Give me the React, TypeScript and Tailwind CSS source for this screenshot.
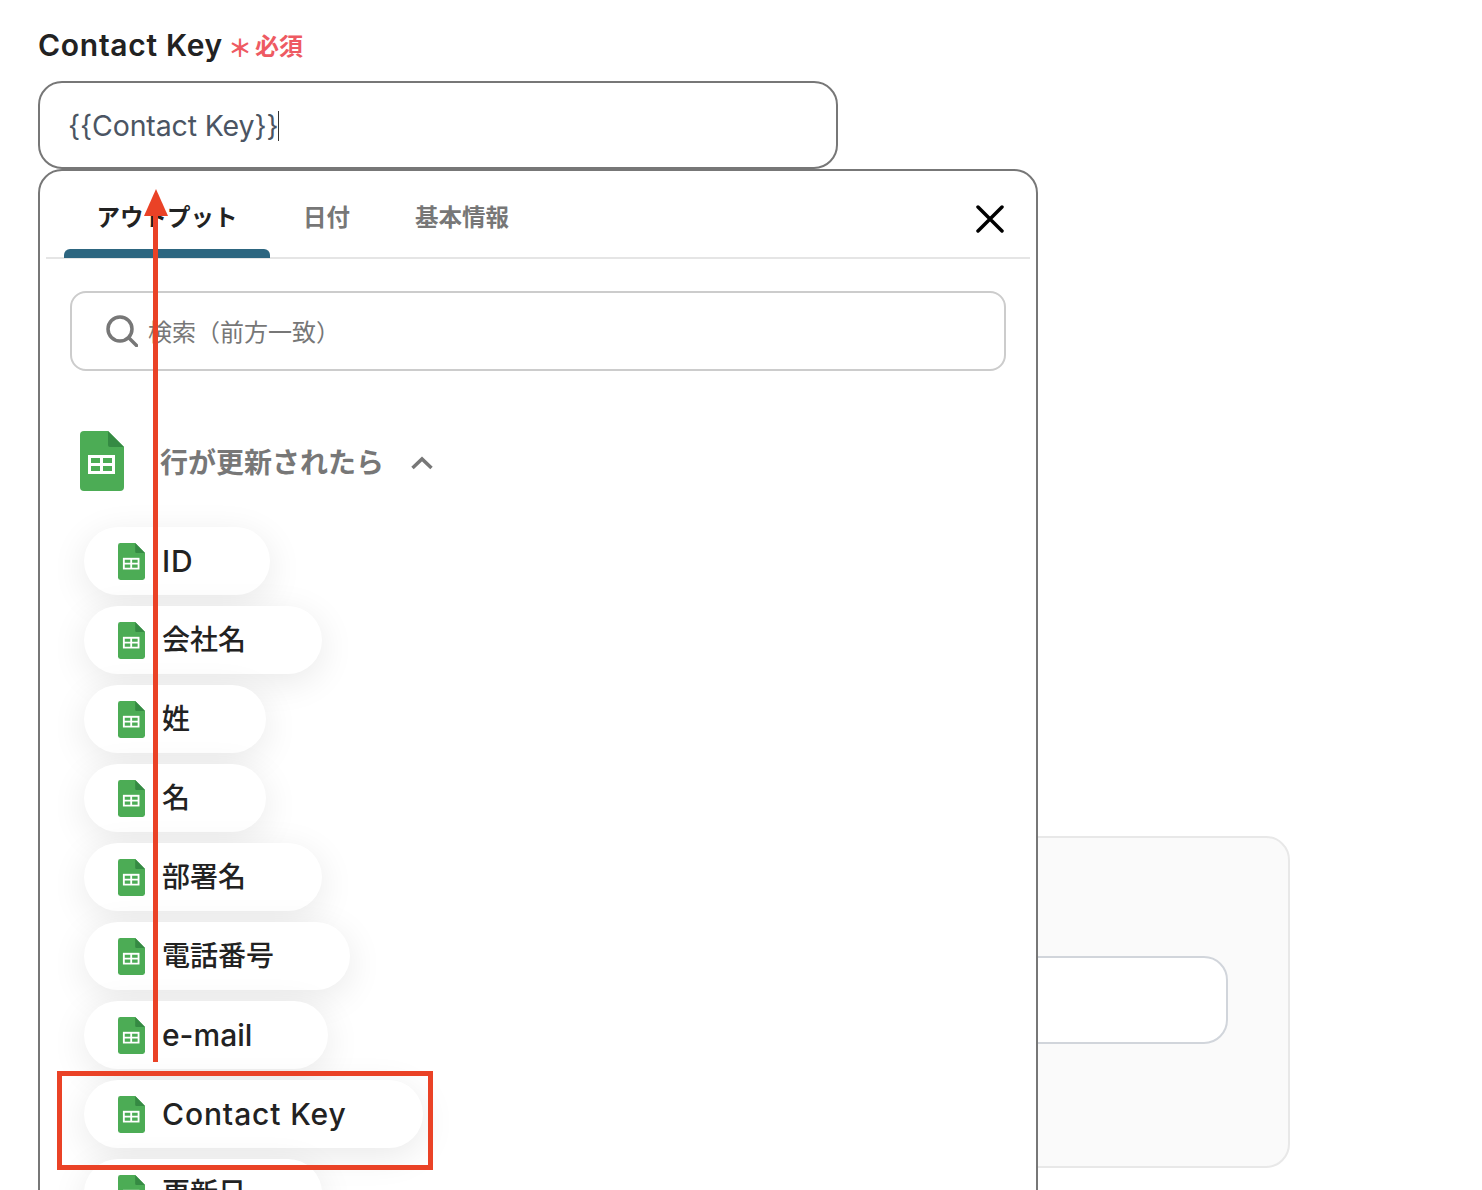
import React from "react";

const Sheets = ({ className }: { className: string }) => (
  <svg viewBox="0 0 44 60" className={className}>
    <path d="M4 0H28L44 16V56a4 4 0 0 1-4 4H4a4 4 0 0 1-4-4V4a4 4 0 0 1 4-4Z" fill="#4CAC55" />
    <path d="M28 0L44 16H30a2 2 0 0 1-2-2Z" fill="#358A43" />
    <path d="M8 24H35V43H8Z" fill="#fff" />
    <path d="M11 27H20V32H11ZM23 27H32V32H23ZM11 35H20V40H11ZM23 35H32V40H23Z" fill="#4CAC55" />
  </svg>
);

const items = [
  { t: "ID", cls: "text-[30px] tracking-[0.03em]" },
  { t: "会社名", cls: "text-[28px]" },
  { t: "姓", cls: "text-[28px]" },
  { t: "名", cls: "text-[28px]" },
  { t: "部署名", cls: "text-[28px]" },
  { t: "電話番号", cls: "text-[28px]" },
  { t: "e-mail", cls: "text-[30px]" },
  { t: "Contact Key", cls: "text-[30px] tracking-[0.03em]" },
  { t: "更新日", cls: "text-[28px]" },
];

export default function App() {
  return (
    <div className="relative h-[1190px] overflow-hidden bg-white font-['Inter','Noto_Sans_CJK_JP',sans-serif]">
      <div className="pl-[38px] pt-[24px] w-[1290px]">
        <div className="flex items-center h-[42px] text-[#222]">
          <span className="text-[30px] font-semibold tracking-[0.024em] leading-[42px]">Contact Key</span>
          <span className="ml-[5px] text-[24px] font-medium text-[#ee5a62] leading-[42px] flex items-center">
            <span className="font-['Noto_Sans_CJK_JP'] font-bold w-[27px] mt-[3px] text-[24px]">＊</span>
            <span className="font-['Noto_Sans_CJK_JP'] font-bold">必須</span>
          </span>
        </div>
        <div className="mt-[15px] h-[88px] w-[800px] rounded-[24px] border-2 border-[#777] flex items-center pl-[28px] pt-[2px] text-[28.5px] text-[#4b5563] bg-white">
          <span className="font-normal tracking-[-0.005em]">{"{{Contact Key}}"}</span>
          <span className="w-px h-[30px] bg-[#333]"></span>
        </div>
        <div className="mt-[667px] h-[332px] rounded-[24px] border-2 border-[#e8e8e8] bg-[#fafafa] pt-[118px] pr-[60px]">
          <div className="h-[88px] rounded-[24px] border-2 border-[#d1d5db] bg-white"></div>
        </div>
      </div>

      <div className="absolute left-[38px] top-[169px] w-[1000px] h-[1100px] rounded-[24px] border-2 border-[#777] bg-white">
        <div className="mx-[6px] h-[88px] border-b-2 border-[#e5e5e5] flex relative">
          <div className="ml-[18px] w-[206px] h-[87px] relative flex justify-center pt-[28px] leading-[34px] font-bold text-[#222]">
            <span className="font-['Noto_Sans_CJK_JP'] text-[23.5px]">アウトプット</span>
            <div className="absolute left-0 right-0 bottom-0 h-[9px] rounded-t-[6px] bg-[#2d6680]"></div>
          </div>
          <span className="ml-[33px] pt-[28px] font-['Noto_Sans_CJK_JP'] text-[23.5px] leading-[34px] font-bold text-[#777]">日付</span>
          <span className="ml-[65px] pt-[28px] font-['Noto_Sans_CJK_JP'] text-[23.5px] leading-[34px] font-bold text-[#777]">基本情報</span>
          <svg viewBox="0 0 28 28" className="absolute left-[930px] top-[34px] w-[28px] h-[28px]" fill="none" stroke="#000" strokeWidth="3.5" strokeLinecap="round">
            <path d="M2 2L26 26M26 2L2 26" />
          </svg>
        </div>

        <div className="mx-[30px] mt-[32px] h-[80px] rounded-[16px] border-2 border-[#ccc] flex items-center pl-[34px] text-[24px] text-[#777] w-[936px]">
          <svg viewBox="0 0 32 32" className="w-[32px] h-[32px] mr-[10px]" fill="none" stroke="#777" strokeWidth="3.5" strokeLinecap="round">
            <circle cx="14" cy="14" r="12" />
            <path d="M23 23L30.5 30.5" />
          </svg>
          <span className="font-['Noto_Sans_CJK_JP']">検索（前方一致）</span>
        </div>

        <div className="ml-[40px] mt-[60px] h-[60px] flex items-center">
          <Sheets className="w-[44px] h-[60px]" />
          <span className="ml-[36px] font-['Noto_Sans_CJK_JP'] text-[28px] font-bold text-[#777]">行が更新されたら</span>
          <svg viewBox="0 0 22 14" className="ml-[27px] mt-[4px] w-[22px] h-[14px]" fill="none" stroke="#777" strokeWidth="3.5">
            <path d="M1.5 12L11 3L20.5 12" />
          </svg>
        </div>

        <div className="ml-[44px] mt-[36px] flex flex-col items-start gap-[11px]">
          {items.map((it) => (
            <div
              key={it.t}
              className="h-[68px] flex items-center pl-[34px] pr-[76px] rounded-full bg-white shadow-[0_8px_36px_rgba(0,0,0,0.09)]"
            >
              <Sheets className="w-[27px] h-[37px] mr-[17px] shrink-0" />
              <span className={`${it.cls} font-medium text-[#222] whitespace-nowrap`}>{it.t}</span>
            </div>
          ))}
        </div>
      </div>

      <svg viewBox="0 0 26 874" className="absolute left-[143px] top-[188px] w-[26px] h-[874px]">
        <path d="M10 20H15V874H10Z" fill="#ea4226" />
        <path d="M13 1L25 28H1Z" fill="#ea4226" />
      </svg>
      <div className="absolute left-[57px] top-[1071px] w-[376px] h-[99px] border-[5px] border-[#ea4226]"></div>
    </div>
  );
}
